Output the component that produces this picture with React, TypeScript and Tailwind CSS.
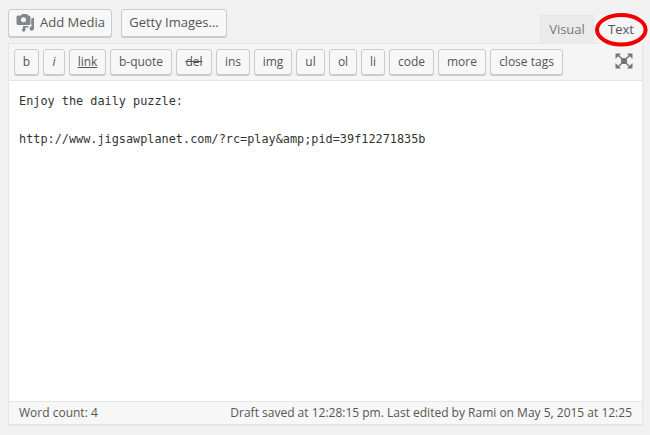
import type { ReactNode } from "react";

const quicktags = [
    { label: "b", w: "w-[25px]", extra: "font-medium" },
    { label: "i", w: "w-[22px]", extra: "italic" },
    { label: "link", w: "w-[37px]", extra: "underline" },
    { label: "b-quote", w: "w-[62px]", extra: "" },
    { label: "del", w: "w-[36px]", extra: "line-through" },
    { label: "ins", w: "w-[34px]", extra: "" },
    { label: "img", w: "w-[38px]", extra: "" },
    { label: "ul", w: "w-[29px]", extra: "" },
    { label: "ol", w: "w-[28px]", extra: "" },
    { label: "li", w: "w-[24px]", extra: "" },
    { label: "code", w: "w-[45px]", extra: "" },
    { label: "more", w: "w-[48px]", extra: "" },
    { label: "close tags", w: "w-[73px]", extra: "" },
];

function MediaButton({ children, className }: { children: ReactNode; className: string }) {
    return (
        <button className={`flex h-[28px] items-center rounded-[3px] border border-[#cccccc] bg-[#f7f7f7] text-[13px] text-[#555555] shadow-[0_1px_0_#cccccc] ${className}`}>
            {children}
        </button>
    );
}

function MediaIcon() {
    return (
        <svg width="20" height="18" viewBox="0 0 20 18" className="mr-[4px] text-[#82878c]" fill="currentColor">
            <path fillRule="evenodd" d="M2 1.500h3L6 0h5l1 1.500h1A1.500 1.500 0 0 1 14.500 3v6.500A1.500 1.500 0 0 1 13 11H2A1.500 1.500 0 0 1 .5 9.500V3A1.500 1.500 0 0 1 2 1.500zm5.500 1.700a2.500 2.500 0 1 0 0 5 2.500 2.500 0 0 0 0-5z" />
            <path d="M15.500 4H18v10.500a2.200 2.200 0 1 1-2.500-2.200V9.500h-.5z" />
            <path d="M7 12h5.500v1.500H9.500v2.300A1.800 1.800 0 1 1 7 14.200z" />
        </svg>
    );
}

function FullscreenIcon() {
    return (
        <svg width="18" height="16" viewBox="0 0 18 16" fill="#72777c">
            <rect x="6" y="5" width="6" height="6" />
            <path d="M0.500 0.500H6L4.300 2.200 6.800 4.700 5.700 5.800 3.200 3.300 0.500 6z" />
            <path d="M17.500 0.500H12L13.700 2.200 11.200 4.700 12.300 5.800 14.800 3.300 17.500 6z" />
            <path d="M0.500 15.500H6L4.300 13.800 6.800 11.300 5.700 10.200 3.200 12.700 0.500 10z" />
            <path d="M17.500 15.500H12L13.700 13.800 11.200 11.300 12.300 10.200 14.800 12.700 17.500 10z" />
        </svg>
    );
}

export default function App() {
    return (
        <div className="relative flex h-[435px] w-[650px] flex-col overflow-hidden bg-[#f1f1f1] pl-[8px] pr-[7px] font-['Open_Sans',sans-serif] text-[#444444]">
            {/* Media buttons and editor tabs */}
            <div className="relative z-10 flex h-[44px] items-start justify-between">
                <div className="flex gap-[9px] pt-[9px]">
                    <MediaButton className="w-[104px] pl-[7px]">
                        <MediaIcon />
                        Add Media
                    </MediaButton>
                    <MediaButton className="w-[106px] justify-center">Getty Images...</MediaButton>
                </div>
                <div className="mt-[15px] flex h-[29px] gap-[5px] text-[13px]">
                    <div className="flex w-[54px] items-center justify-center border border-b-0 border-[#e5e5e5] bg-[#ebebeb] text-[#777777]">
                        Visual
                    </div>
                    <div className="flex w-[44px] items-center justify-center bg-[#f5f5f5] text-[#555555]">
                        Text
                    </div>
                </div>
            </div>

            {/* Editor */}
            <div className="-mt-px flex h-[382px] flex-col border border-[#e5e5e5] bg-white shadow-[0_1px_1px_rgba(0,0,0,0.04)]">
                <div className="flex h-[37px] shrink-0 items-start justify-between border-b border-[#e5e5e5] bg-[#f5f5f5] pl-[5px] pr-[9px] pt-[5px]">
                    <div className="flex gap-[4px]">
                        {quicktags.map((tag) => (
                            <button
                                key={tag.label}
                                className={`h-[26px] rounded-[3px] border border-[#cccccc] bg-[#f7f7f7] text-center text-[12px] text-[#555555] shadow-[0_1px_0_#cccccc] ${tag.w} ${tag.extra}`}
                            >
                                {tag.label}
                            </button>
                        ))}
                    </div>
                    <div className="pt-[4px]">
                        <FullscreenIcon />
                    </div>
                </div>
                <div className="flex-1 whitespace-pre px-[10px] pt-[11px] font-['DejaVu_Sans_Mono',monospace] text-[11.85px] leading-[19px] text-[#333333]">
                    {"Enjoy the daily puzzle:\n\nhttp://www.jigsawplanet.com/?rc=play&amp;pid=39f12271835b"}
                </div>
                <div className="flex h-[23px] shrink-0 items-center justify-between border-t border-[#e5e5e5] bg-[#f7f7f7] pl-[10px] pr-[10px] text-[12px] text-[#555555]">
                    <span>Word count: 4</span>
                    <span>Draft saved at 12:28:15 pm. Last edited by Rami on May 5, 2015 at 12:25</span>
                </div>
            </div>

            {/* Red annotation circling the Text tab */}
            <svg width="56" height="38" viewBox="0 0 56 38" fill="none" className="absolute left-[594px] top-[11px] z-20">
                <ellipse cx="27.300" cy="18.800" rx="24.300" ry="14.700" stroke="#ee0000" strokeWidth="4" />
            </svg>
        </div>
    );
}
